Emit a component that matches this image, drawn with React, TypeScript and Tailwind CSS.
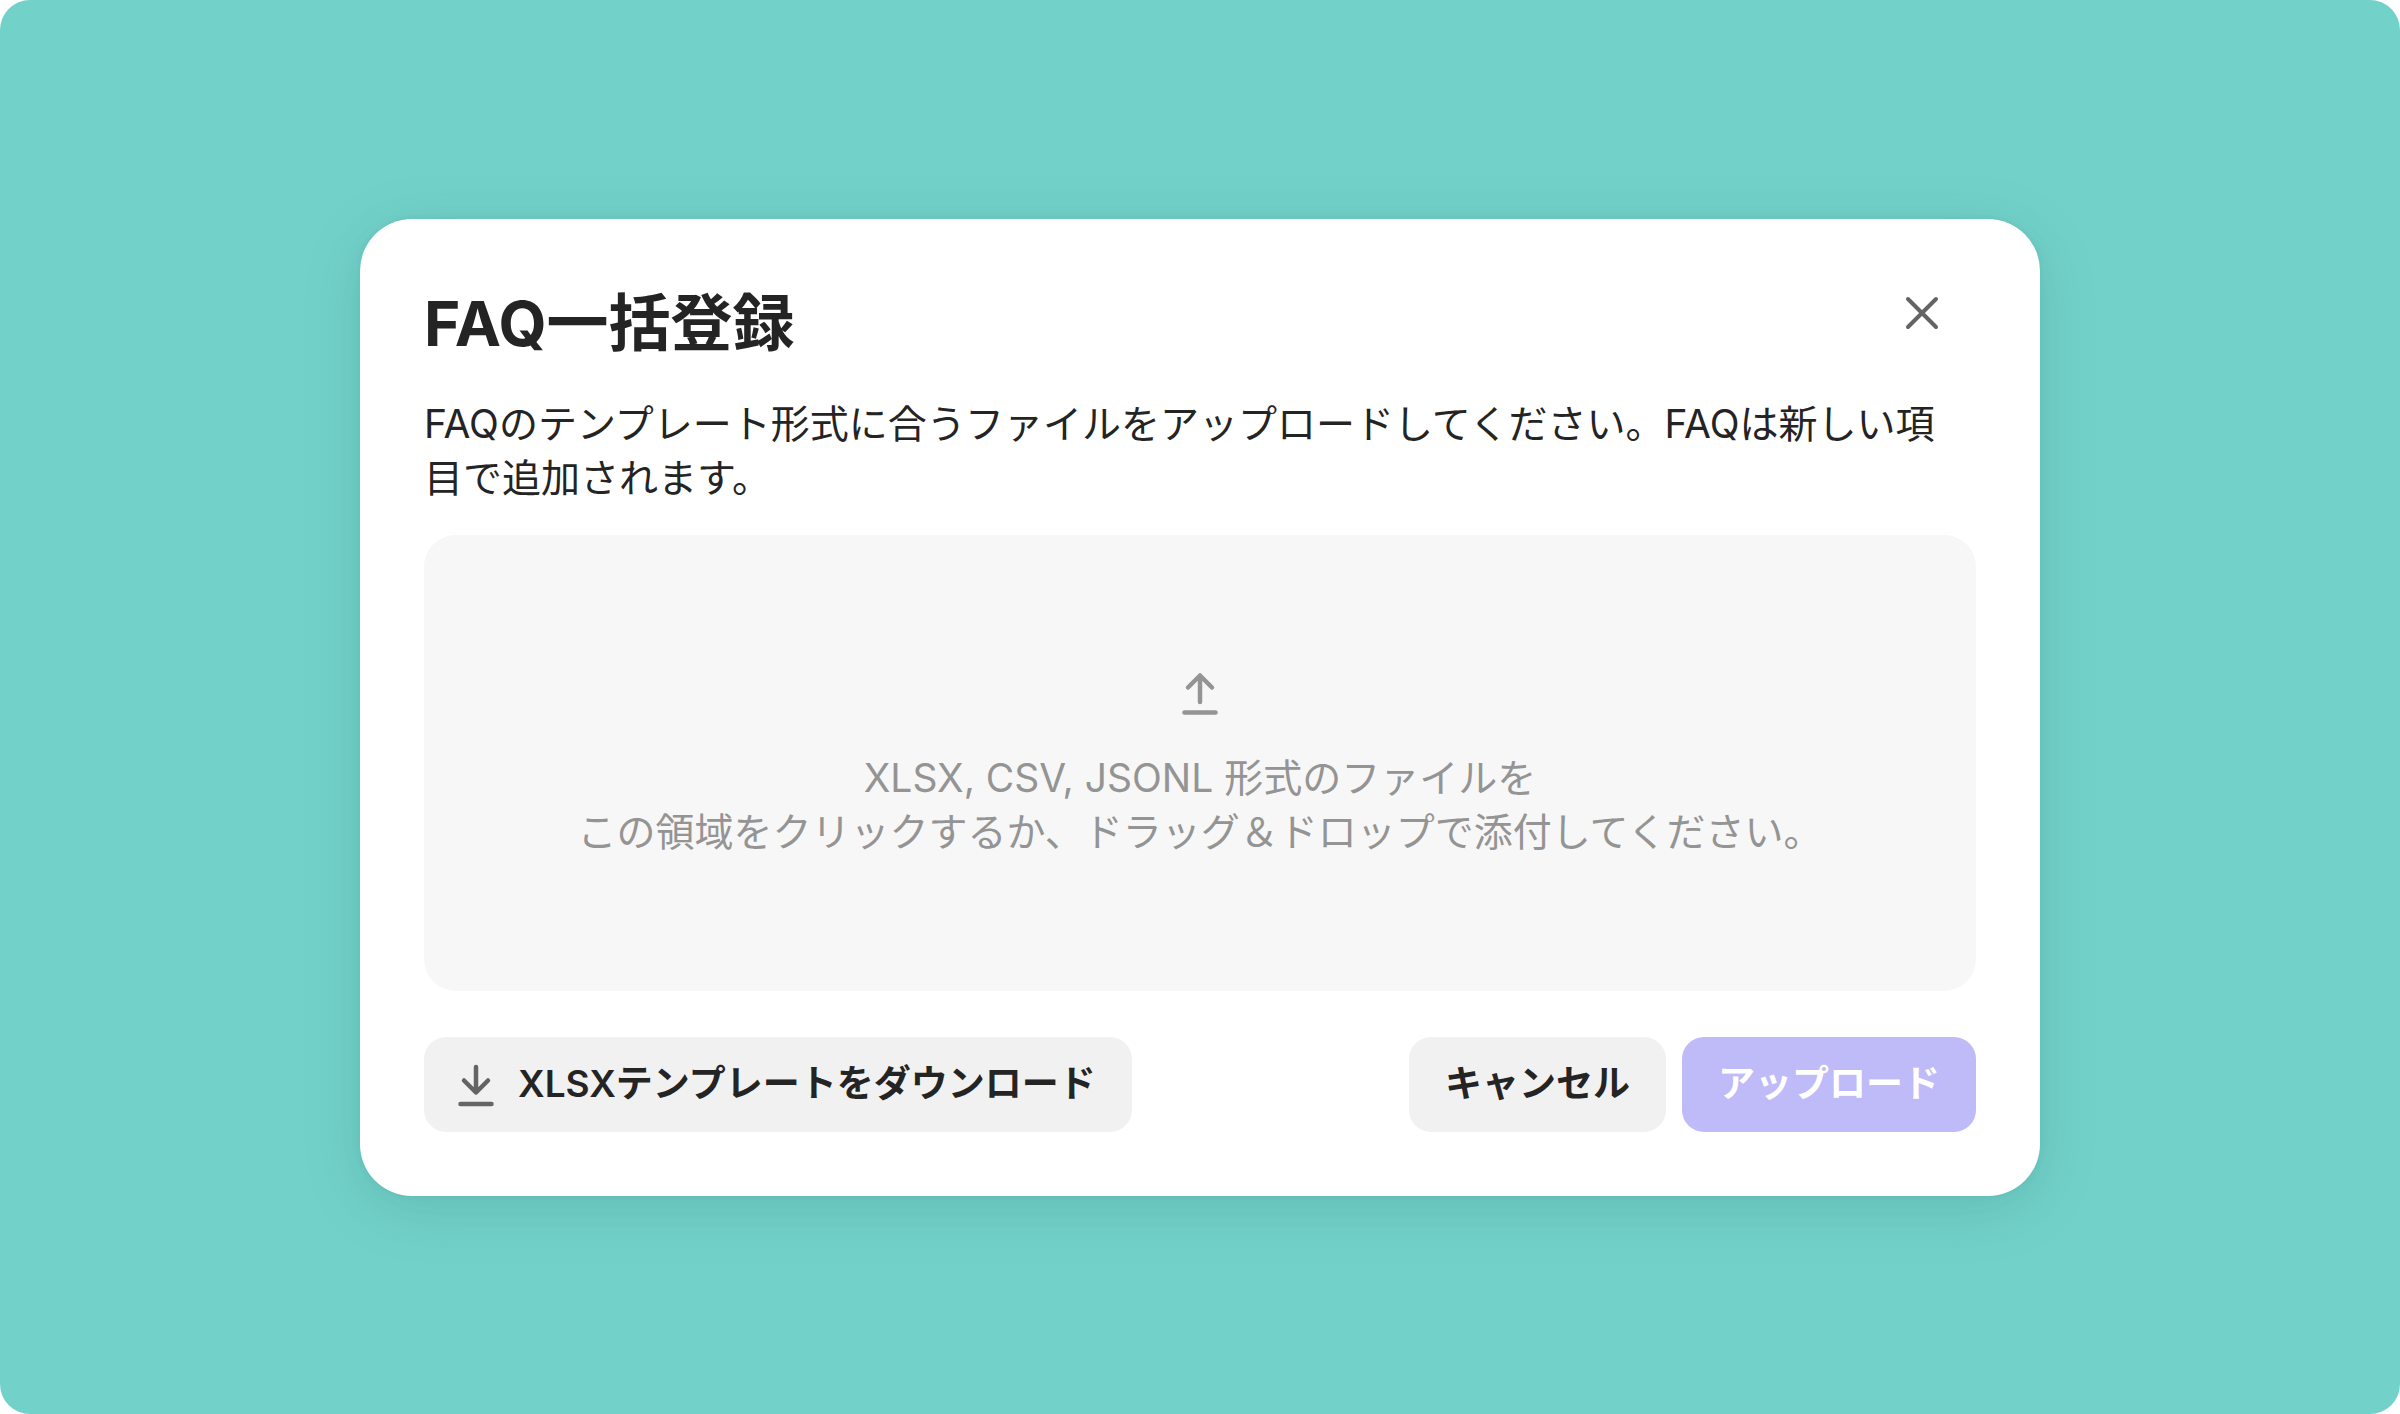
import React, { useState } from 'react';

interface IconProps {
  className?: string;
}

function CloseIcon({ className }: IconProps) {
  return (
    <svg viewBox="0 0 36 36" fill="none" stroke="currentColor" strokeWidth="4" strokeLinecap="round" className={className} aria-hidden="true">
      <path d="M4 4l28 28M32 4L4 32" />
    </svg>
  );
}

function UploadIcon({ className }: IconProps) {
  return (
    <svg viewBox="0 0 40 48" fill="none" stroke="currentColor" strokeWidth="4.5" strokeLinecap="round" strokeLinejoin="round" className={className} aria-hidden="true">
      <path d="M20 35V8.5M8 20.5l12-12 12 12M4.5 45.5h31" />
    </svg>
  );
}

function DownloadIcon({ className }: IconProps) {
  return (
    <svg viewBox="0 0 40 48" fill="none" stroke="currentColor" strokeWidth="4.5" strokeLinecap="round" strokeLinejoin="round" className={className} aria-hidden="true">
      <path d="M20 7v25M8 20.5l12 12 12-12M4.5 44h31" />
    </svg>
  );
}

export default function App() {
  const [isOpen, setIsOpen] = useState(true);
  const [file, setFile] = useState<File | null>(null);

  const handleDrop = (e: React.DragEvent) => {
    e.preventDefault();
    setFile(e.dataTransfer.files[0] ?? null);
  };

  return (
    <div className="min-h-screen bg-white font-['Inter','Noto_Sans_CJK_JP',sans-serif]">
      <main className="flex min-h-screen items-center justify-center rounded-[30px] bg-[#72d2ca] text-[#242424]">
        {isOpen && (
          <section
            role="dialog"
            aria-labelledby="dialog-title"
            className="w-[70%] rounded-[52px] bg-white px-16 pt-16 pb-16 shadow-[0_12px_60px_rgba(0,60,60,0.15),0_0_6px_rgba(0,60,60,0.06)]"
          >
            {/* Header */}
            <div className="flex items-start justify-between pr-9">
              <h1 id="dialog-title" className="text-[62px] leading-[82px] font-bold">FAQ一括登録</h1>
              <button type="button" aria-label="閉じる" onClick={() => setIsOpen(false)} className="mt-3 text-[#646464]">
                <CloseIcon className="h-9 w-9" />
              </button>
            </div>

            <p className="mt-8 pr-9 text-[39px] leading-[54px]">
              FAQのテンプレート形式に合うファイルをアップロードしてください。FAQは新しい項目で追加されます。
            </p>

            {/* Drop area */}
            <label
              onDragOver={(e) => e.preventDefault()}
              onDrop={handleDrop}
              className="mt-[30px] flex h-[456px] cursor-pointer flex-col items-center justify-center rounded-[32px] bg-[#f7f7f7] text-center text-[39px] leading-[54px] text-[#949494]"
            >
              <input
                type="file"
                accept=".xlsx,.csv,.jsonl"
                className="sr-only"
                onChange={(e) => setFile(e.target.files?.[0] ?? null)}
              />
              <UploadIcon className="mb-9 h-12 w-10" />
              <span>XLSX, CSV, JSONL 形式のファイルを</span>
              <span>この領域をクリックするか、ドラッグ＆ドロップで添付してください。</span>
            </label>

            {/* Actions */}
            <div className="mt-[46px] flex items-center justify-between text-[37px] leading-[54px] font-semibold">
              <button type="button" className="flex h-[95px] items-center gap-[22px] rounded-[22px] bg-[#f1f1f1] pr-9 pl-8">
                <DownloadIcon className="h-12 w-10 text-[#646464]" />
                XLSXテンプレートをダウンロード
              </button>
              <div className="flex gap-4">
                <button type="button" onClick={() => setIsOpen(false)} className="h-[95px] rounded-[22px] bg-[#f1f1f1] px-9">
                  キャンセル
                </button>
                <button type="button" disabled={!file} className="h-[95px] rounded-[22px] bg-[#bfbaf8] px-9 text-white">
                  アップロード
                </button>
              </div>
            </div>
          </section>
        )}
      </main>
    </div>
  );
}
